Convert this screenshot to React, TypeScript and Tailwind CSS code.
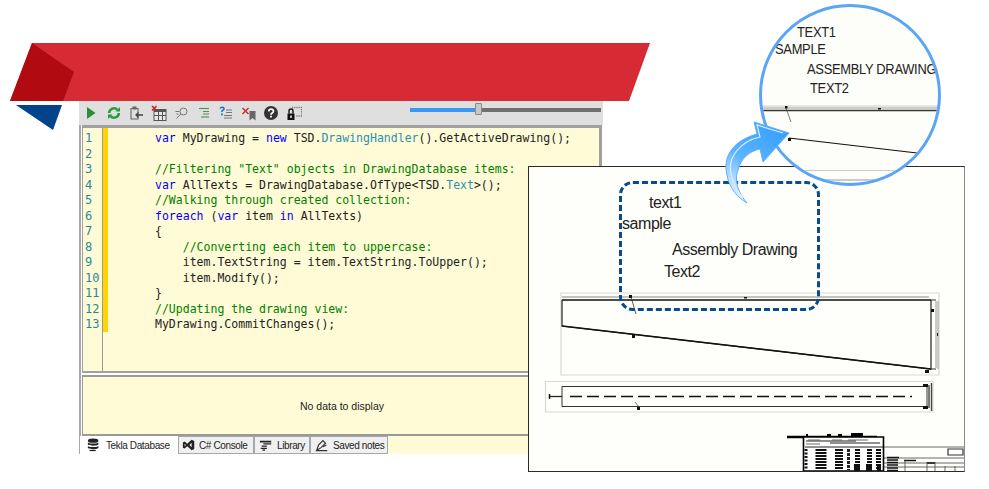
const KW = "text-[#0000ff]";
const TY = "text-[#2b91af]";
const CM = "text-[#008000]";

type Seg = [string, string?];

const codeLines: Seg[][] = [
  [["var", KW], [" MyDrawing = "], ["new", KW], [" TSD."], ["DrawingHandler", TY], ["().GetActiveDrawing();"]],
  [],
  [['//Filtering "Text" objects in DrawingDatabase items:', CM]],
  [["var", KW], [" AllTexts = DrawingDatabase.OfType<TSD."], ["Text", TY], [">();"]],
  [["//Walking through created collection:", CM]],
  [["foreach", KW], [" ("], ["var", KW], [" item "], ["in", KW], [" AllTexts)"]],
  [["{"]],
  [["    "], ["//Converting each item to uppercase:", CM]],
  [["    item.TextString = item.TextString.ToUpper();"]],
  [["    item.Modify();"]],
  [["}"]],
  [["//Updating the drawing view:", CM]],
  [["MyDrawing.CommitChanges();"]],
];

const ToolIcon = ({ children }: { children: React.ReactNode }) => (
  <svg viewBox="0 0 16 16" className="w-4 h-4 shrink-0">
    {children}
  </svg>
);

const toolbarIcons = [
  <path key="play" d="M4 2 L12.500 8 L4 14 Z" fill="#2e8b3a" />,
  <g key="refresh" fill="none" stroke="#2f9a3c" strokeWidth="2.600">
    <path d="M3.200 8a4.800 4.800 0 0 1 8.300-3.200" />
    <path d="M12.800 8a4.800 4.800 0 0 1-8.300 3.200" />
    <path d="M14 2v4.500H9.500M2 14V9.500h4.500" fill="#2f9a3c" stroke="none" />
  </g>,
  <g key="clip" fill="none" stroke="#666" strokeWidth="1.100">
    <path d="M3 3.500h7v10.500H3z" />
    <path d="M5 2h3v2H5z" fill="#666" />
    <path d="M15 10H8M10.500 7.500 8 10l2.500 2.500" stroke="#444" strokeWidth="1.300" />
  </g>,
  <g key="table">
    <path d="M2.500 4h13v12h-13z" fill="#555" />
    <path d="M3.500 7h3.500v3H3.500zM8 7h3v3H8zM12 7h2.500v3H12zM3.500 11h3.500v4H3.500zM8 11h3v4H8zM12 11h2.500v4H12z" fill="#e8e8e8" />
    <path d="M1 1l4.500 4.500M5.500 1L1 5.500" stroke="#c22" strokeWidth="1.500" />
  </g>,
  <g key="find" fill="none" stroke="#777" strokeWidth="1">
    <circle cx="10.500" cy="6.500" r="3.500" />
    <path d="M7.800 9 L3.500 13.500M2.500 6.500h4M3.500 9h2" />
  </g>,
  <g key="list" stroke="#777" strokeWidth="1.100">
    <path d="M3 3.500h10" stroke="#3c9a48" />
    <path d="M7 6.500h6M7 9h6" />
    <path d="M5 12h8" stroke="#3c9a48" />
  </g>,
  <g key="listq">
    <path d="M2 3.500c1-2 4.500-1.700 4 .5-.3 1.300-2.200 1.300-2.200 3" fill="none" stroke="#1f6fc4" strokeWidth="1.500" />
    <path d="M3 8.500h1.800v1.800H3z" fill="#1f6fc4" />
    <path d="M8 5h6M8 7.500h6M6 10.500h8M6 13h8" stroke="#777" strokeWidth="1" />
  </g>,
  <g key="xmark">
    <path d="M1.500 3l6 6M7.500 3l-6 6" stroke="#c0352a" strokeWidth="1.500" />
    <path d="M8.500 6h6v9.500l-3-2.500-3 2.500z" fill="#666" />
  </g>,
  <g key="help">
    <circle cx="8" cy="8" r="7" fill="#333" />
    <path d="M5.700 6.300c.3-2.800 4.900-2.800 4.800 0-.1 1.800-2.500 1.700-2.500 3.400" fill="none" stroke="#fff" strokeWidth="1.700" />
    <path d="M7.100 10.800h1.800v1.800H7.100z" fill="#fff" />
  </g>,
  <g key="lock">
    <path d="M6 2.500h9.500v8.500H10" fill="none" stroke="#777" strokeWidth="1.300" strokeDasharray="1.200 1" />
    <path d="M1.500 8.500h7V15h-7z" fill="#111" />
    <path d="M3 8.500V6a2 2 0 0 1 4 0v2.500" fill="none" stroke="#111" strokeWidth="1.400" />
    <path d="M4.300 10.500h1.400v2.500H4.300z" fill="#fff" />
  </g>,
];

const tabs = [
  {
    label: "Tekla Database",
    cls: "w-[98px] pl-[7px] gap-[5px] bg-white",
    icon: (
      <g fill="#222">
        <ellipse cx="7" cy="3" rx="6" ry="2.500" />
        <path d="M1 5c2 1.800 10 1.800 12 0v2.500c-2 1.800-10 1.800-12 0z" />
        <path d="M1 9c2 1.800 10 1.800 12 0v2.500c-2 1.800-10 1.800-12 0z" />
        <path d="M3 13.500h7v1.500H3z" />
      </g>
    ),
  },
  {
    label: "C# Console",
    cls: "w-[76px] pl-[3px] gap-[3px] bg-[#f0f0f0] border border-[#a8a8a8]",
    icon: <path d="M1 5l2-1 3 2.500L11 2l3 1.500v9L11 14 6 9.500 3 12l-2-1zM3 6.500v3L4.500 8zM11 5.500L8.500 8 11 10.500z" fill="#222" fillRule="evenodd" />,
  },
  {
    label: "Library",
    cls: "w-[56px] pl-[4px] gap-[4px] bg-[#f0f0f0] border border-[#a8a8a8]",
    icon: <path d="M1 3h13v2H1zM5 6h9v1.500H5zM3 8.500h6V10H3zM2 11h7v1.500H2zM4 13h3v1.500H4z" fill="#222" />,
  },
  {
    label: "Saved notes",
    cls: "w-[78px] pl-[4px] gap-[4px] bg-[#f0f0f0] border border-[#a8a8a8]",
    icon: (
      <g fill="none" stroke="#333" strokeWidth="1.300">
        <path d="M2 14l2-6 5-5 3 3-5 5z" />
        <path d="M1 14.500h13M9 10l4-2" />
      </g>
    ),
  },
];

const sheetTexts = [
  { text: "text1", cls: "left-[120px] top-[26px] w-[40px]" },
  { text: "sample", cls: "left-[93px] top-[47px] w-[60px]" },
  { text: "Assembly Drawing", cls: "left-[143px] top-[73px] w-[140px]" },
  { text: "Text2", cls: "left-[135px] top-[95px] w-[50px]" },
];

const circleTexts = [
  { text: "TEXT1", cls: "left-[35px] top-[17px]" },
  { text: "SAMPLE", cls: "left-[13px] top-[34px]" },
  { text: "ASSEMBLY DRAWING", cls: "left-[45px] top-[54px]" },
  { text: "TEXT2", cls: "left-[48px] top-[73px]" },
];

const TitleBlock = () => (
  <g>
    <path d="M787 437H877" stroke="#000" strokeWidth="2.500" />
    <path d="M803.500 437h80v34h-80z" fill="#fff" stroke="#000" strokeWidth="1.600" />
    <path d="M806 441h50M830 443h50M805 447h78" stroke="#222" strokeWidth="1.200" />
    <path d="M806 444h14M832 440h10M848 440h20M808 440h12" stroke="#666" strokeWidth="1" />
    <path d="M806 449V470" stroke="#111" strokeWidth="3" strokeDasharray="2 1.500" />
    <path d="M821 449V470" stroke="#111" strokeWidth="11" strokeDasharray="2 1" />
    <path d="M839 449V470" stroke="#111" strokeWidth="8" strokeDasharray="2 1" />
    <path d="M848.500 449V470" stroke="#222" strokeWidth="3" strokeDasharray="3 1" />
    <path d="M857.500 449V470" stroke="#111" strokeWidth="5" strokeDasharray="2 1" />
    <path d="M869.500 449V470" stroke="#111" strokeWidth="5" strokeDasharray="2 1" />
    <path d="M878.500 449V470" stroke="#111" strokeWidth="5" strokeDasharray="2 1" />
    <path d="M854 464h6v7h-6zM866 464h6v7h-6zM877 464h4v7h-4z" fill="#111" />
    <path d="M806 436h2v-2h-2zM827 436h4v-2h-4zM838 436h4v-2h-4zM851 436h12v-3h-12z" fill="#000" />
    <path d="M884 447H964M884 458H964M884 463H964M884 467H964" stroke="#444" strokeWidth="0.800" />
    <path d="M948 449h15v6h-15z" fill="#fff" stroke="#333" strokeWidth="1.200" />
    <path d="M887 457.500h12M887 460h11M887 462.500h11M887 465h11M887 468h11M887 470.500h11M904 460.500h12M927 463h8" stroke="#111" strokeWidth="1.300" />
    <path d="M905 460v11M927 462v9M935 462v9M945 466v5M955 466v5" stroke="#444" strokeWidth="0.800" />
  </g>
);

export default function App() {
  return (
    <div className="relative w-[989px] h-[489px] overflow-hidden bg-white font-['Liberation_Sans',sans-serif]">
      {/* editor window */}
      <div className="flex flex-col w-[524px] ml-[79px] pt-[101px]">
        <div className="flex items-center h-[24px] bg-[#dfdfdf] pl-[4px]">
          <div className="flex items-center gap-[6.500px]">
            {toolbarIcons.map((icon, i) => (
              <ToolIcon key={i}>{icon}</ToolIcon>
            ))}
          </div>
          <div className="relative ml-auto mr-[2px] w-[191px] h-[4px] bg-[#707070] mt-[-6px]">
            <div className="h-full w-[68px] bg-[#3b97f0]" />
            <div className="absolute left-[65px] top-[-5px] w-[7px] h-[12px] bg-[#c8c8c8] border border-[#8a8a8a] rounded-[1px]" />
          </div>
        </div>
        <div className="flex flex-col border-l-2 border-[#a8a8a8]">
          <div className="flex h-[248px] ml-[1px] mr-[1px] border-t-[3px] border-r-[3px] border-l border-b-2 border-[#a0a0a0] bg-[#fffbd6]">
            <div className="flex flex-col w-[20px] pt-[3px] border-r border-[#9a9a9a] font-['DejaVu_Sans_Mono',monospace] text-[12px] leading-[15.500px] text-[#1f8a9e] pl-[2px]">
              {codeLines.map((_, i) => (
                <span key={i}>{i + 1}</span>
              ))}
            </div>
            <div className="w-[5px] h-[204px] bg-[#ffd400]" />
            <div className="flex flex-col pt-[3px] pl-[47px] font-['DejaVu_Sans_Mono',monospace] text-[11.530px] leading-[15.500px] text-[#222] whitespace-pre">
              {codeLines.map((line, i) => (
                <div key={i} className="h-[15.500px]">
                  {line.map(([t, c], j) => (
                    <span key={j} className={c}>
                      {t}
                    </span>
                  ))}
                </div>
              ))}
            </div>
          </div>
          <div className="flex items-center justify-center h-[61px] ml-[1px] mr-[1px] mt-[2px] border-y-2 border-x border-[#9a9a9a] bg-[#fffbd6] text-[10.500px] text-[#222]">
            <span className="pt-[3px]">No data to display</span>
          </div>
          <div className="flex items-stretch h-[18px] -ml-[1px] mr-[1px] bg-[#fffbd6] text-[10px] tracking-[-0.380px] text-[#222]">
            {tabs.map((tab) => (
              <div key={tab.label} className={`flex items-center ${tab.cls}`}>
                <svg viewBox="0 0 16 16" className="w-[14px] h-[14px] shrink-0">
                  {tab.icon}
                </svg>
                <span>{tab.label}</span>
              </div>
            ))}
          </div>
        </div>
      </div>

      {/* red banner */}
      <svg viewBox="0 0 989 489" className="absolute left-0 top-0 w-[989px] h-[489px] pointer-events-none">
        <path d="M32 43H650L629 101H10Z" fill="#d62a35" />
        <path d="M32 43L74 72L63 101H10Z" fill="#b10a10" />
        <path d="M16 105H62L53 130Z" fill="#03438c" />
      </svg>

      {/* drawing sheet */}
      <div className="absolute left-[528px] top-[166px] w-[437px] h-[306px] bg-[#fefefa] border-l border-t border-b border-r border-[#2a2a2a] border-r-[#8a8a8a]">
        <svg viewBox="529 167 435 304" className="absolute inset-0 w-[435px] h-[304px]">
          <path d="M561 293H939V375H561ZM545.500 381.500H933V412H545.500Z" fill="none" stroke="#d8d8d8" strokeWidth="1.200" />
          <path d="M562 297H929" stroke="#888" strokeWidth="1" />
          <path d="M562 300V326L931 369V300" fill="none" stroke="#222" strokeWidth="1.200" />
          <path d="M562 326L931 369" stroke="#111" strokeWidth="1.500" />
          <path d="M562 300H931" stroke="#111" strokeWidth="1.600" />
          <path d="M936 301V368M938 301V369" stroke="#aaa" strokeWidth="1.200" />
          <path d="M930 300H936M930 369H936" stroke="#333" strokeWidth="1" />
          <path d="M629 295h3v3h-3zM632 335h3v3h-3zM744 297h3v1.500h-3zM931 309h3v3h-3zM925 370h4v3h-4zM937 333h1v3h-1z" fill="#111" />
          <path d="M631 297L636 314" stroke="#333" strokeWidth="0.800" />
          <path d="M562 386.500H927V406.500H562V386.500" fill="none" stroke="#333" strokeWidth="1" />
          <path d="M549 396.500H562" stroke="#222" strokeWidth="1.300" />
          <path d="M549.500 394V399" stroke="#111" strokeWidth="1.500" />
          <path d="M570 396.500H912" stroke="#111" strokeWidth="1.500" strokeDasharray="12 5" />
          <path d="M929 385V408M931.500 383V411" stroke="#444" strokeWidth="1.400" />
          <path d="M923 384h5v3h-5zM923 406h5v3h-5zM637 407h3v3h-3z" fill="#111" />
          <path d="M635 402L639 407" stroke="#444" strokeWidth="0.700" />
          <TitleBlock />
        </svg>
        <div className="absolute left-[90px] top-[14px] w-[201px] h-[130px] rounded-[14px] border-[3px] border-dashed border-[#0b4a8e]" />
        {sheetTexts.map((t) => (
          <span key={t.text} className={`absolute ${t.cls} text-[16px] leading-[20px] tracking-[-0.450px] whitespace-nowrap text-[#222]`}>
            {t.text}
          </span>
        ))}
      </div>

      {/* magnifier */}
      <div className="absolute left-[759px] top-[4px] w-[182px] h-[182px] rounded-full border-[3px] border-[#5aa5f5] bg-[#fdfdf9] overflow-hidden">
        <svg viewBox="762 7 176 176" className="absolute inset-0 w-[176px] h-[176px]">
          <path d="M762 106H940" stroke="#ccc" strokeWidth="1" />
          <path d="M762 108H940" stroke="#bbb" strokeWidth="1.500" />
          <path d="M762 110.500H940" stroke="#333" strokeWidth="1.500" />
          <path d="M785 106h2.500v2.500H785zM878 108h3v1.500h-3zM788 138h3v3h-3z" fill="#111" />
          <path d="M786 108L791 122" stroke="#444" strokeWidth="0.700" />
          <path d="M789 138L917 153" stroke="#111" strokeWidth="1.200" />
          <path d="M762 170.500H940" stroke="#ccc" strokeWidth="1" />
          <path d="M800 180H880" stroke="#999" strokeWidth="1" />
        </svg>
        {circleTexts.map((t) => (
          <span key={t.text} className={`absolute ${t.cls} text-[14px] leading-[16px] tracking-[-0.300px] scale-x-[0.92] origin-left whitespace-nowrap text-[#222]`}>
            {t.text}
          </span>
        ))}
      </div>

      {/* curved arrow */}
      <svg viewBox="715 110 90 100" className="absolute left-[715px] top-[110px] w-[90px] h-[100px]">
        <defs>
          <linearGradient id="arrowFill" x1="0.800" y1="0.100" x2="0.300" y2="1">
            <stop offset="0" stopColor="#3aa2ff" />
            <stop offset="0.550" stopColor="#5cb4ff" />
            <stop offset="1" stopColor="#e4f3ff" />
          </linearGradient>
        </defs>
        <path
          d="M789 133L754 122L757 134C735 140 722 155 727 175C729 188 738 198 747 203C738 193 734 180 738 170C741 158 750 151 760 149L763 162Z"
          fill="url(#arrowFill)"
          stroke="#5cb0ff"
          strokeWidth="1"
        />
        <path d="M783 133L757 125L760 137C741 141 727 157 731 174C733 184 738 192 743 198" fill="none" stroke="#d8eeff" strokeWidth="1.200" />
      </svg>
    </div>
  );
}
